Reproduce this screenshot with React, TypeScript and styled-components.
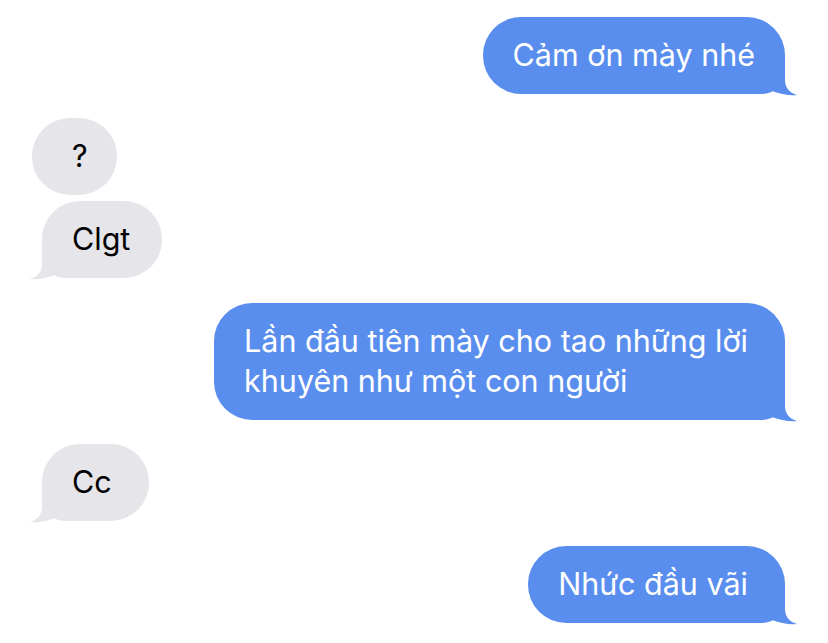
import React from "react";
import styled, { createGlobalStyle } from "styled-components";

const Global = createGlobalStyle`
  html, body { margin: 0; padding: 0; background: #ffffff; }
  body { font-family: Inter, "Noto Sans", "DejaVu Sans", sans-serif; }
`;

const BLUE = "#5a8eee";
const GRAY = "#e5e5ea";

const Thread = styled.div`
  width: 828px;
  height: 643px;
  box-sizing: border-box;
  padding: 17px 43px 0 32px;
  display: flex;
  flex-direction: column;
  overflow: hidden;
`;

const Row = styled.div<{ $me: boolean; $gap: number; $indent?: number }>`
  display: flex;
  justify-content: ${(p) => (p.$me ? "flex-end" : "flex-start")};
  margin-top: ${(p) => p.$gap}px;
  padding-left: ${(p) => p.$indent ?? 0}px;
`;

const Bubble = styled.div<{ $me: boolean; $tail: boolean; $pad?: string }>`
  position: relative;
  background: ${(p) => (p.$me ? BLUE : GRAY)};
  color: ${(p) => (p.$me ? "#ffffff" : "#000000")};
  font-size: 30.5px;
  letter-spacing: 0;
  line-height: 40px;
  padding: ${(p) => p.$pad ?? "18px 30px 19px"};
  border-radius: 38px;
  ${(p) =>
    p.$tail
      ? p.$me
        ? "border-bottom-right-radius: 23px;"
        : "border-bottom-left-radius: 23px;"
      : ""}
  white-space: nowrap;
`;

const TailSvg = styled.svg<{ $me: boolean }>`
  position: absolute;
  bottom: -2px;
  width: 28px;
  height: 28px;
  ${(p) => (p.$me ? "right: -12px;" : "left: -12px; transform: scaleX(-1);")}
`;

function Tail({ me }: { me: boolean }) {
  return (
    <TailSvg $me={me} viewBox="0 0 28 28">
      <path
        d="M3,0 H16 V12 C16,20 21,25 28,27 C21,28 11,26 3,23 Z"
        fill={me ? BLUE : GRAY}
      />
    </TailSvg>
  );
}

type Msg = {
  me: boolean;
  gap: number;
  tail: boolean;
  indent?: number;
  pad?: string;
  lines: string[];
};

const messages: Msg[] = [
  { me: true, gap: 0, tail: true, lines: ["Cảm ơn mày nhé"] },
  { me: false, gap: 24, tail: false, indent: 0, pad: "18px 29px 19px 40px", lines: ["?"] },
  { me: false, gap: 6, tail: true, indent: 10, pad: "18px 32px 19px 30px", lines: ["Clgt"] },
  {
    me: true,
    gap: 25,
    tail: true,
    pad: "18px 37px 19px 30px",
    lines: ["Lần đầu tiên mày cho tao những lời", "khuyên như một con người"],
  },
  { me: false, gap: 24, tail: true, indent: 10, pad: "18px 37px 19px 30px", lines: ["Cc"] },
  { me: true, gap: 25, tail: true, pad: "18px 37px 19px 30px", lines: ["Nhức đầu vãi"] },
];

export default function App() {
  return (
    <>
      <Global />
      <Thread>
        {messages.map((m, i) => (
          <Row key={i} $me={m.me} $gap={m.gap} $indent={m.indent}>
            <Bubble $me={m.me} $tail={m.tail} $pad={m.pad}>
              {m.lines.map((l, j) => (
                <React.Fragment key={j}>
                  {j > 0 && <br />}
                  {l}
                </React.Fragment>
              ))}
              {m.tail && <Tail me={m.me} />}
            </Bubble>
          </Row>
        ))}
      </Thread>
    </>
  );
}
